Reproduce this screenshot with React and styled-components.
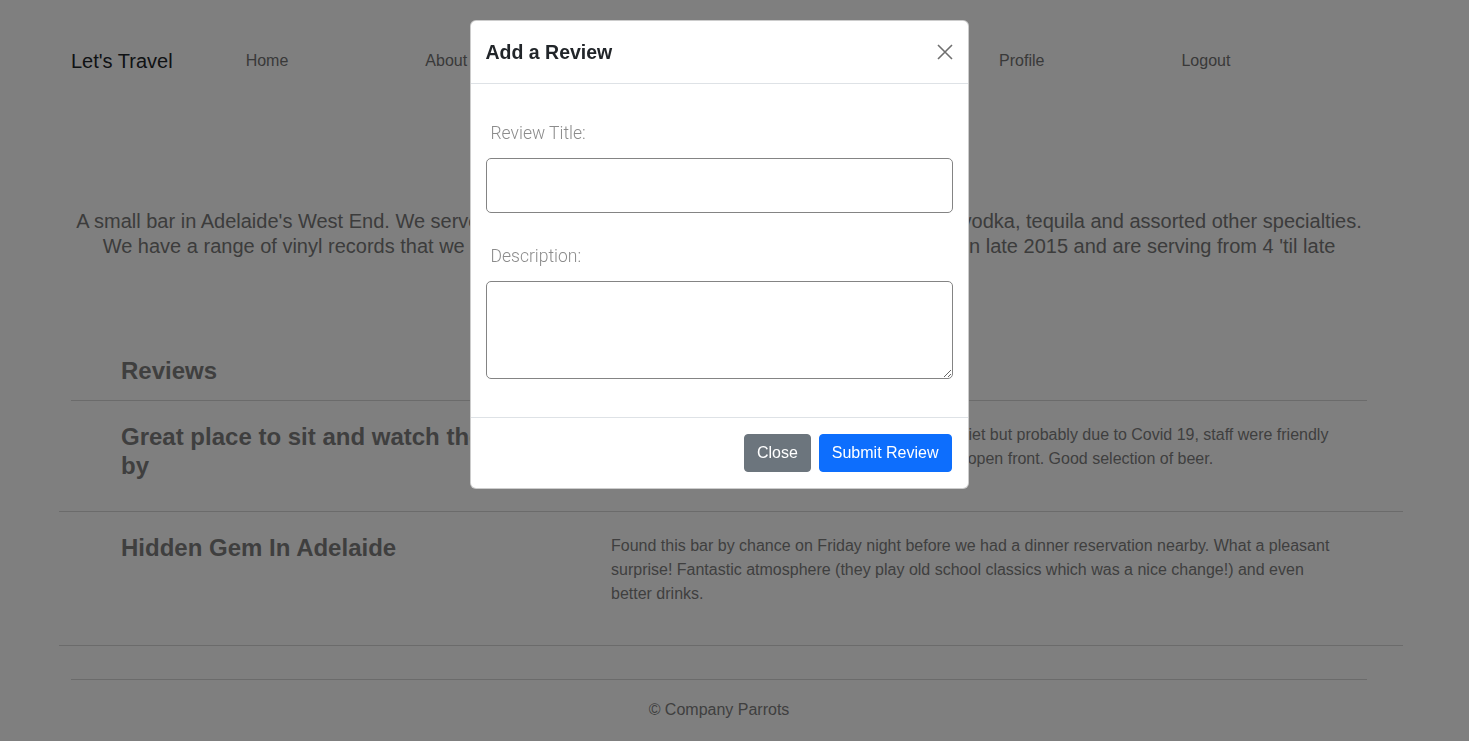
import React from 'react';
import styled, { createGlobalStyle } from 'styled-components';

const GlobalStyle = createGlobalStyle`
  html, body {
    margin: 0;
    padding: 0;
    overflow: hidden;
    background: #fff;
  }
  body {
    font-family: "Liberation Sans", Arial, sans-serif;
    color: #212529;
  }
  * {
    box-sizing: border-box;
  }
`

// Page Styles
const Page = styled.div`
  width: 1438px;
  height: 741px;
  overflow: hidden;
`

const Container = styled.div`
  width: 1296px;
  margin: 0 auto;
`

const NavBar = styled.nav`
  display: flex;
  align-items: center;
  height: 30px;
  margin-top: 46px;
`

const Brand = styled.a`
  font-size: 20px;
  line-height: 30px;
  color: #212529;
  text-decoration: none;
  margin-right: 73px;
`

const NavMenu = styled.ul`
  list-style-type: none;
  display: flex;
  gap: 137px;
  margin: 0;
  padding: 0;
`

const NavLink = styled.a`
  font-size: 16px;
  line-height: 24px;
  color: #737373;
  text-decoration: none;
`

const Intro = styled.p`
  margin: 133px 0 0;
  font-size: 20px;
  line-height: 25px;
  text-align: center;
  color: #787878;
`

const SectionTitle = styled.h2`
  margin: 97px 0 0;
  padding: 0 0 15px 50px;
  font-size: 24px;
  line-height: 29px;
  font-weight: 700;
  color: #7f7f7f;
  border-bottom: 1px solid #d6d6d6;
`

const ReviewRow = styled.div`
  display: grid;
  grid-template-columns: 490px 1fr;
  margin: 0 -36px 0 -12px;
  padding: 22px 62px 22px 62px;
  border-bottom: 1px solid #d6d6d6;
`

const ReviewTitle = styled.h3`
  margin: 0 0 8px;
  font-size: 24px;
  line-height: 28.8px;
  font-weight: 700;
  color: #7f7f7f;
`

const ReviewText = styled.p`
  margin: 0 0 17px;
  font-size: 16px;
  line-height: 24px;
  color: #7f7f7f;
`

const Footer = styled.footer`
  margin-top: 33px;
  padding-top: 18px;
  border-top: 1px solid #d6d6d6;
  text-align: center;
  font-size: 16px;
  line-height: 24px;
  color: #7f7f7f;
`

// Modal Styles
const Backdrop = styled.div`
  position: fixed;
  inset: 0;
  background: rgba(0, 0, 0, 0.5);
`

const ModalLayer = styled.div`
  position: fixed;
  top: 0;
  left: 0;
  width: 1438px;
  display: flex;
  justify-content: center;
`

const Dialog = styled.div`
  width: 499px;
  margin-top: 20px;
  background: #fff;
  border: 1px solid rgba(0, 0, 0, 0.2);
  border-radius: 6px;
`

const ModalHeader = styled.div`
  display: flex;
  justify-content: space-between;
  align-items: center;
  padding: 16px 15px 16px 15px;
  border-bottom: 1px solid #dee2e6;
`

const ModalTitle = styled.h5`
  margin: 0;
  font-size: 19.5px;
  line-height: 30px;
  font-weight: 700;
  color: #212529;
`

const CloseButton = styled.button`
  display: flex;
  width: 16px;
  height: 16px;
  padding: 0;
  border: 0;
  background: transparent;
  cursor: pointer;
`

const ModalBody = styled.div`
  padding: 34px 15px 38px;
`

const Field = styled.div`
  & + & {
    margin-top: 28px;
  }
`

const Label = styled.label`
  display: block;
  margin-bottom: 11px;
  padding: 2px 0 0 5px;
  font-family: Roboto, "Liberation Sans", sans-serif;
  font-weight: 300;
  font-size: 17.5px;
  line-height: 27px;
  color: #8c8c8c;
`

const TextInput = styled.input`
  display: block;
  width: 100%;
  height: 55px;
  border: 1px solid #848484;
  border-radius: 5px;
  padding: 6px 12px;
  font-size: 16px;
  font-family: inherit;
`

const TextArea = styled.textarea`
  display: block;
  width: 100%;
  height: 98px;
  border: 1px solid #848484;
  border-radius: 5px;
  padding: 6px 12px;
  font-size: 16px;
  font-family: inherit;
`

const ModalFooter = styled.div`
  display: flex;
  justify-content: flex-end;
  padding: 12px;
  border-top: 1px solid #dee2e6;
`

const Button = styled.button`
  margin: 4px;
  padding: 6px 12px;
  border: 1px solid ${p => p.$bg};
  border-radius: 4px;
  background: ${p => p.$bg};
  color: #fff;
  font-family: inherit;
  font-size: 16px;
  line-height: 24px;
  cursor: pointer;
`

const reviews = [
  {
    title: 'Great place to sit and watch the world go by',
    text: 'Lovely little spot with a brilliant view, it was a bit quiet but probably due to Covid 19, staff were friendly and we were lucky to grab a nice table right at the open front. Good selection of beer.',
  },
  {
    title: 'Hidden Gem In Adelaide',
    text: 'Found this bar by chance on Friday night before we had a dinner reservation nearby. What a pleasant surprise! Fantastic atmosphere (they play old school classics which was a nice change!) and even better drinks.',
  },
]

const App = () => {
  return (
    <>
      <GlobalStyle />
      <Page>
        <Container>
          <NavBar>
            <Brand href="#">Let's Travel</Brand>
            <NavMenu>
              <li><NavLink href="#">Home</NavLink></li>
              <li><NavLink href="#">About</NavLink></li>
              <li><NavLink href="#">Places</NavLink></li>
              <li><NavLink href="#">Add Place</NavLink></li>
              <li><NavLink href="#">Profile</NavLink></li>
              <li><NavLink href="#">Logout</NavLink></li>
            </NavMenu>
          </NavBar>

          <Intro>
            A small bar in Adelaide's West End. We serve craft beers, natural wine, cocktails, whiskey, gin, rum, vodka, tequila and assorted other specialties.
            <br />
            We have a range of vinyl records that we spin every night of the week. We first opened our doors in late 2015 and are serving from 4 'til late
          </Intro>

          <SectionTitle>Reviews</SectionTitle>
          {reviews.map(r => (
            <ReviewRow key={r.title}>
              <ReviewTitle>{r.title}</ReviewTitle>
              <ReviewText>{r.text}</ReviewText>
            </ReviewRow>
          ))}

          <Footer>© Company Parrots</Footer>
        </Container>
      </Page>

      <Backdrop />
      <ModalLayer>
        <Dialog>
          <ModalHeader>
            <ModalTitle>Add a Review</ModalTitle>
            <CloseButton aria-label="Close">
              <svg width="16" height="16" viewBox="0 0 16 16">
                <path d="M1 1L15 15M15 1L1 15" stroke="#6f6f6f" strokeWidth="1.6" fill="none" />
              </svg>
            </CloseButton>
          </ModalHeader>
          <ModalBody>
            <Field>
              <Label htmlFor="title">Review Title:</Label>
              <TextInput id="title" type="text" />
            </Field>
            <Field>
              <Label htmlFor="desc">Description:</Label>
              <TextArea id="desc" />
            </Field>
          </ModalBody>
          <ModalFooter>
            <Button $bg="#6c757d">Close</Button>
            <Button $bg="#0d6efd">Submit Review</Button>
          </ModalFooter>
        </Dialog>
      </ModalLayer>
    </>
  )
}

export default App;
